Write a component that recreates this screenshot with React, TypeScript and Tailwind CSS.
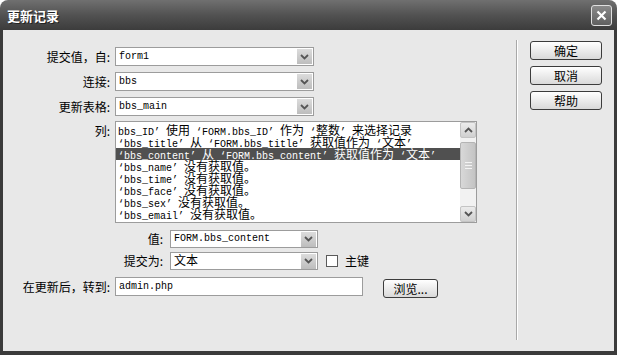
import React from 'react'

const CJK = /([\u3000-\u303f\u4e00-\u9fff\uff00-\uffef]+)/

// mono text with CJK runs in a larger sans face
function Mixed({ text }: { text: string }) {
  const parts = text.split(CJK)
  return (
    <>
      {parts.map((p, i) =>
        i % 2 === 1 ? (
          <span key={i} className="font-['Noto_Sans_CJK_SC',sans-serif] text-[12px] leading-[12px]">{p}</span>
        ) : (
          <span key={i}>{p}</span>
        )
      )}
    </>
  )
}

function Chevron({ up = false }: { up?: boolean }) {
  return (
    <svg width="9" height="6" viewBox="0 0 9 6" className={up ? 'rotate-180' : ''}>
      <path d="M1 1 L4.5 4.5 L8 1" fill="none" stroke="#555" strokeWidth="1.8" />
    </svg>
  )
}

function Select({ value, w, h }: { value: string; w: string; h: string }) {
  return (
    <div className={`flex items-center border border-[#9c9c9c] bg-white pl-[3px] pr-px ${w} ${h}`}>
      <div className="flex h-[15px] flex-1 items-center whitespace-nowrap font-['Liberation_Mono',monospace] text-[10px] leading-[12px] text-black">
        <span>
          <Mixed text={value} />
        </span>
      </div>
      <div className="flex h-[15px] w-[15px] items-center justify-center bg-gradient-to-b from-[#dcdcdc] to-[#bdbdbd]">
        <Chevron />
      </div>
    </div>
  )
}

function Btn({ label, w }: { label: string; w: string }) {
  return (
    <div className={`flex h-[19px] items-center justify-center rounded-[3px] border border-[#3c3c3c] bg-gradient-to-b from-white to-[#d9d9d9] font-['Noto_Sans_CJK_SC',sans-serif] text-[12px] leading-none text-black ${w}`}>
      {label}
    </div>
  )
}

const ROWS = [
  "bbs_ID’ 使用 ‘FORM.bbs_ID’ 作为 ‘整数’ 来选择记录",
  "‘bbs_title’ 从 ‘FORM.bbs_title’ 获取值作为 ‘文本’",
  "‘bbs_content’ 从 ‘FORM.bbs_content’ 获取值作为 ‘文本’",
  "‘bbs_name’ 没有获取值。",
  "‘bbs_time’ 没有获取值。",
  "‘bbs_face’ 没有获取值。",
  "‘bbs_sex’ 没有获取值。",
  "‘bbs_email’ 没有获取值。",
]

const label = "font-['Noto_Sans_CJK_SC',sans-serif] text-[12px] leading-none text-black text-right"

export default function App() {
  return (
    <div className="flex h-[355px] w-[617px] flex-col overflow-hidden bg-white">
      {/* title bar */}
      <div className="flex h-[30px] items-center justify-between rounded-t-[8px] bg-gradient-to-b from-[#707070] via-[#525252] to-[#3c3c3c] pl-[7px] pr-[5px]">
        <span className="font-['Noto_Sans_CJK_SC',sans-serif] text-[13px] font-bold leading-none text-white [text-shadow:1px_1px_0_#222]">更新记录</span>
        <div className="flex h-[21px] w-[21px] items-center justify-center rounded-[3px] border border-[#e0e0e0] bg-gradient-to-b from-[#8a8a8a] to-[#606060]">
          <svg width="11" height="11" viewBox="0 0 11 11">
            <path d="M1.5 1.5 L9.5 9.5 M9.5 1.5 L1.5 9.5" stroke="white" strokeWidth="2.2" />
          </svg>
        </div>
      </div>

      {/* body */}
      <div className="flex flex-1 bg-[#3b3b3b] px-[3px] pb-[4px]">
        <div className="flex flex-1 bg-[#e8e8e8]">
          {/* form */}
          <div className="flex w-[513px] flex-col pt-[17px]">
            <div className="flex items-center gap-[5px]">
              <div className={`w-[107px] ${label}`}>提交值，自:</div>
              <Select value="form1" w="w-[199px]" h="h-[19px]" />
            </div>
            <div className="mt-[6px] flex items-center gap-[5px]">
              <div className={`w-[107px] ${label}`}>连接:</div>
              <Select value="bbs" w="w-[199px]" h="h-[19px]" />
            </div>
            <div className="mt-[6px] flex items-center gap-[5px]">
              <div className={`w-[107px] ${label}`}>更新表格:</div>
              <Select value="bbs_main" w="w-[199px]" h="h-[19px]" />
            </div>

            <div className="mt-[5px] flex items-start gap-[5px]">
              <div className={`w-[107px] pt-[4px] ${label}`}>列:</div>
              <div className="flex h-[102px] w-[362px] border border-[#9c9c9c] bg-white">
                <div className="flex-1 pt-[2px] font-['Liberation_Mono',monospace] text-[10px] text-black">
                  {ROWS.map((r, i) => (
                    <div
                      key={i}
                      className={`h-[12px] whitespace-nowrap pl-[2px] leading-[12px] ${i === 2 ? 'bg-[#505050] text-white' : ''}`}
                    >
                      <Mixed text={r} />
                    </div>
                  ))}
                </div>
                <div className="flex w-[16px] flex-col bg-[#f2f2f2]">
                  <div className="flex h-[16px] items-center justify-center rounded-[2px] border border-[#c4c4c4] bg-gradient-to-b from-[#ececec] to-[#d0d0d0]">
                    <Chevron up />
                  </div>
                  <div className="mt-[4px] flex h-[47px] items-center justify-center rounded-[2px] border border-[#b4b4b4] bg-gradient-to-r from-[#d8d8d8] to-[#c4c4c4]">
                    <div className="flex w-[7px] flex-col gap-[2px]">
                      <div className="h-px bg-[#f4f4f4]" />
                      <div className="h-px bg-[#f4f4f4]" />
                      <div className="h-px bg-[#f4f4f4]" />
                    </div>
                  </div>
                  <div className="flex-1" />
                  <div className="flex h-[16px] items-center justify-center rounded-[2px] border border-[#c4c4c4] bg-gradient-to-b from-[#ececec] to-[#d0d0d0]">
                    <Chevron />
                  </div>
                </div>
              </div>
            </div>

            <div className="mt-[7px] flex items-center gap-[7px]">
              <div className={`w-[160px] ${label}`}>值:</div>
              <Select value="FORM.bbs_content" w="w-[148px]" h="h-[18px]" />
            </div>
            <div className="mt-[4px] flex items-center gap-[7px]">
              <div className={`w-[160px] ${label}`}>提交为:</div>
              <Select value="文本" w="w-[148px]" h="h-[18px]" />
              <div className="ml-[1px] h-[12px] w-[12px] border border-[#5a5a5a] bg-white" />
              <span className={label}>主键</span>
            </div>
            <div className="mt-[5px] flex items-center gap-[5px]">
              <div className={`w-[107px] ${label}`}>在更新后，转到:</div>
              <div className="flex h-[19px] w-[248px] items-center border border-[#9c9c9c] bg-white pl-[3px] font-['Liberation_Mono',monospace] text-[10px] text-black">
                admin.php
              </div>
              <div className="ml-[15px] mt-[4px]">
                <Btn label="浏览..." w="w-[55px]" />
              </div>
            </div>
          </div>

          {/* separator */}
          <div className="mb-[11px] mt-[10px] w-[2px] border-l border-r border-l-[#a8a8a8] border-r-white" />

          {/* buttons */}
          <div className="flex flex-col gap-[6px] pl-[12px] pt-[11px]">
            <Btn label="确定" w="w-[72px]" />
            <Btn label="取消" w="w-[72px]" />
            <Btn label="帮助" w="w-[72px]" />
          </div>
        </div>
      </div>
    </div>
  )
}
